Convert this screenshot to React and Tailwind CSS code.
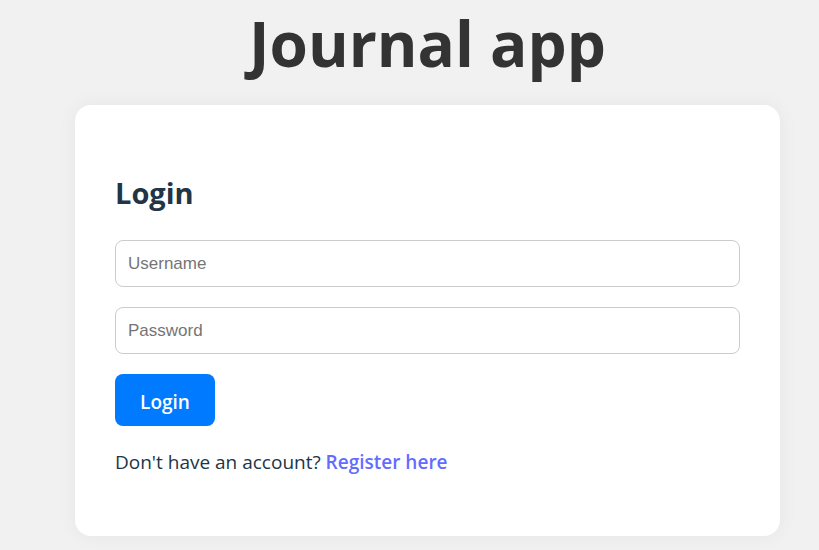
const field =
  "block h-[47px] w-full rounded-lg border border-[#cccccc] bg-white px-3 font-['Liberation_Sans',Arial,sans-serif] text-[17px] text-[#213547] outline-none placeholder:text-[#757575]";

export default function App() {
  return (
    <main className="min-h-screen bg-[#f1f1f1] pr-[39px] pl-[75px] font-['Open_Sans','Noto_Sans',sans-serif] text-[#213547]">
      <h1 className="pt-[7px] pb-[25px] text-center text-[62px] leading-[73px] font-bold text-[#333333]">
        Journal app
      </h1>
      <section className="rounded-2xl bg-white px-10 pt-[69px] pb-[60px] shadow-[0_0_20px_rgba(0,0,0,0.05)]">
        <h2 className="mb-7 text-[29px] leading-[38px] font-bold">Login</h2>
        <form className="flex flex-col items-start gap-5" onSubmit={(e) => e.preventDefault()}>
          <input type="text" aria-label="Username" placeholder="Username" className={field} />
          <input type="password" aria-label="Password" placeholder="Password" className={field} />
          <button type="submit" className="h-[52px] w-[100px] rounded-lg bg-[#007bff] pt-1 text-[19px] font-semibold text-white">
            Login
          </button>
        </form>
        <p className="mt-[22px] text-[19px] leading-7">
          Don't have an account?{" "}
          <a href="#register" className="font-semibold text-[#646cff]">Register here</a>
        </p>
      </section>
    </main>
  );
}
